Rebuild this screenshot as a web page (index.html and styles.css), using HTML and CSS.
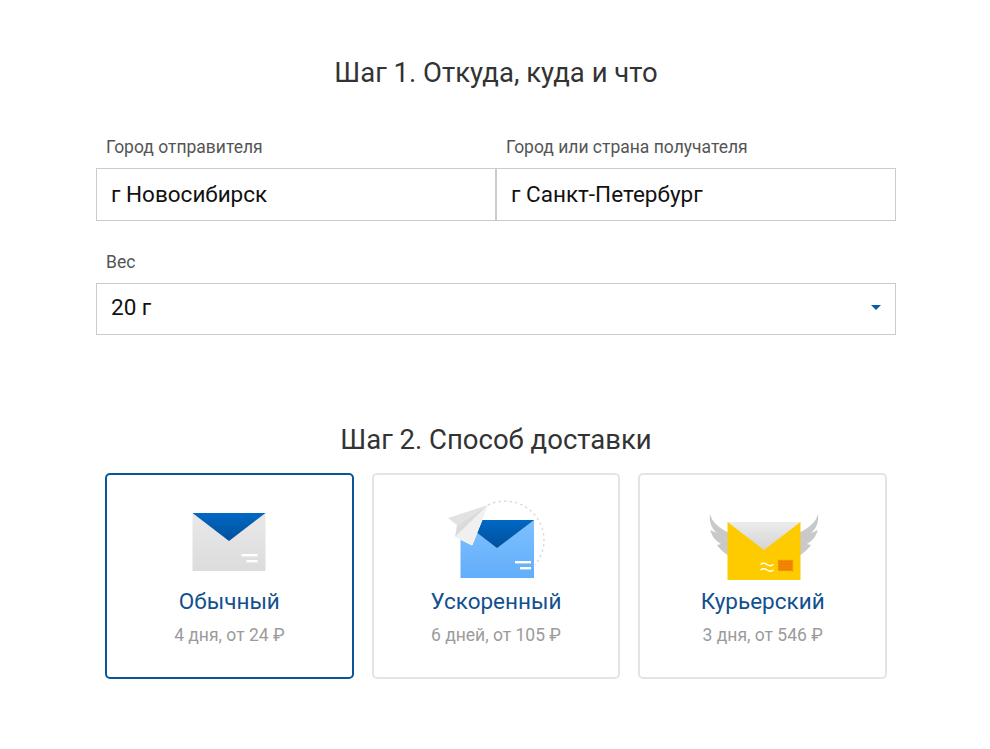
FILE: index.html
```html
<!DOCTYPE html>
<html lang="ru">
<head>
<meta charset="utf-8">
<title>Расчёт доставки</title>
<link rel="stylesheet" href="styles.css">
</head>
<body>
<main class="page">
  <h2 class="step-title">Шаг 1. Откуда, куда и что</h2>
  <div class="cities">
    <div class="field">
      <div class="label">Город отправителя</div>
      <div class="control">г Новосибирск</div>
    </div>
    <div class="field">
      <div class="label">Город или страна получателя</div>
      <div class="control">г Санкт-Петербург</div>
    </div>
  </div>
  <div class="field field-weight">
    <div class="label">Вес</div>
    <div class="control control-select">
      <span>20 г</span>
      <svg class="caret" width="10" height="5" viewBox="0 0 10 5"><path d="M0 0H10L5 5Z" fill="#0a5ba8"/></svg>
    </div>
  </div>

  <h2 class="step-title step-two">Шаг 2. Способ доставки</h2>
  <div class="cards">
    <div class="card card-active">
      <svg class="icon" width="120" height="84" viewBox="0 0 120 84">
        <defs>
          <linearGradient id="g1" x1="0" y1="0" x2="0" y2="1"><stop offset="0" stop-color="#e9e9e9"/><stop offset="1" stop-color="#dcdcdc"/></linearGradient>
          <linearGradient id="b1" x1="0" y1="0" x2="0" y2="1"><stop offset="0" stop-color="#0068c4"/><stop offset="1" stop-color="#00509c"/></linearGradient>
        </defs>
        <rect x="23.5" y="15" width="73" height="58" fill="url(#g1)"/>
        <path d="M23.5 15H96.5L60 43Z" fill="url(#b1)"/>
        <rect x="72.500" y="56" width="16" height="2.400" fill="#fff"/>
        <rect x="77.500" y="62" width="11" height="2.400" fill="#fff"/>
      </svg>
      <div class="card-title">Обычный</div>
      <div class="card-sub">4 дня, от 24 ₽</div>
    </div>
    <div class="card">
      <svg class="icon" width="120" height="84" viewBox="0 0 120 84">
        <defs>
          <linearGradient id="b2" x1="0" y1="0" x2="0" y2="1"><stop offset="0" stop-color="#0068c4"/><stop offset="1" stop-color="#00509c"/></linearGradient>
          <linearGradient id="l2" x1="0" y1="0" x2="0" y2="1"><stop offset="0" stop-color="#7fc0ff"/><stop offset="1" stop-color="#62aefa"/></linearGradient>
          <linearGradient id="p2" x1="0" y1="0" x2="1" y2="1"><stop offset="0" stop-color="#e6e6e6"/><stop offset="1" stop-color="#cdcdcd"/></linearGradient>
        </defs>
        <path d="M52 7A39 39 0 0 1 99 67" fill="none" stroke="#dcdcdc" stroke-width="1.500" stroke-dasharray="2.500 3"/>
        <rect x="24.500" y="22" width="73.500" height="58" fill="url(#l2)"/>
        <path d="M24.500 22H98L61 50Z" fill="url(#b2)"/>
        <rect x="79" y="63" width="16" height="2.400" fill="#fff"/>
        <rect x="84" y="69" width="11" height="2.400" fill="#fff"/>
        <path d="M52 7L12 20L20 39L36 47Z" fill="#fff" stroke="#fff" stroke-width="1"/>
        <path d="M52 7L12 20L21 27Z" fill="#e2e2e2"/>
        <path d="M52 7L21 27L19 39Z" fill="url(#p2)"/>
        <path d="M52 7L19 39L36 47Z" fill="#f0f0f0"/>
      </svg>
      <div class="card-title">Ускоренный</div>
      <div class="card-sub">6 дней, от 105 ₽</div>
    </div>
    <div class="card">
      <svg class="icon" width="120" height="84" viewBox="0 0 120 84">
        <defs>
          <linearGradient id="g3" x1="0" y1="0" x2="0" y2="1"><stop offset="0" stop-color="#ececec"/><stop offset="1" stop-color="#d4d4d4"/></linearGradient>
        </defs>
        <g fill="#c9c9c9">
          <path d="M7 16C9 24 15 29 26 35V58C20 54 17 51 14 47L18 46C13 43 10 40 7 32L14 35C9 31 6 25 7 16Z"/>
          <path d="M115 16C113 24 107 29 96 35V58C102 54 105 51 108 47L104 46C109 43 112 40 115 32L108 35C113 31 116 25 115 16Z"/>
        </g>
        <rect x="24.500" y="24" width="73" height="58" fill="#fecb00"/>
        <path d="M24.500 24H97.500L61 52Z" fill="url(#g3)"/>
        <rect x="75.500" y="62.500" width="14" height="10" fill="#ef7b00" stroke="#f08a00" stroke-width="1.600" stroke-dasharray="1.300 1.300"/>
        <path d="M76 65h13M76 67.500h13M76 70h13" stroke="#f79a10" stroke-width=".6"/>
        <path d="M57.500 66.500q3.200-2.600 6.500 0t6.500 0M57.500 72q3.200-2.600 6.500 0t6.500 0" fill="none" stroke="#fff" stroke-width="1.400"/>
      </svg>
      <div class="card-title">Курьерский</div>
      <div class="card-sub">3 дня, от 546 ₽</div>
    </div>
  </div>
</main>
</body>
</html>
```
FILE: styles.css
```css
* { box-sizing: border-box; }
html, body { margin: 0; background: #fff; }
body { font-family: Roboto, "Noto Sans", sans-serif; color: #333; }
.page { width: 800px; margin-left: 96px; padding-top: 55px; }
.step-title { margin: 0; font-size: 27.5px; font-weight: 400; line-height: 36px; text-align: center; color: #333; }
.step-two { margin-top: 87px; }
.cities { display: flex; margin-top: 46px; }
.field { flex: 1 1 0; }
.field-weight { margin-top: 31px; }
.label { padding-left: 10px; font-size: 17.5px; line-height: 20px; color: #555; margin-bottom: 11px; }
.control { height: 53px; border: 1px solid #ccc; padding: 0 14px; font-size: 22.500px; line-height: 51px; color: #111; }
.control-select { height: 52px; display: flex; justify-content: space-between; align-items: center; padding-bottom: 3px; }
.caret { display: block; }
.cards { display: grid; grid-template-columns: repeat(3, 1fr); gap: 18px; padding: 0 9px; margin-top: 15px; }
.card { height: 206px; border: 2px solid #e4e4e4; border-radius: 5px; padding-top: 23px; display: flex; flex-direction: column; align-items: center; }
.card-active { border-color: #0b5592; }
.icon { display: block; flex: none; }
.card-title { margin-top: 4px; font-size: 22.500px; line-height: 30px; color: #12508f; }
.card-sub { margin-top: 9px; font-size: 17.500px; line-height: 20px; color: #9b9b9b; }
```
